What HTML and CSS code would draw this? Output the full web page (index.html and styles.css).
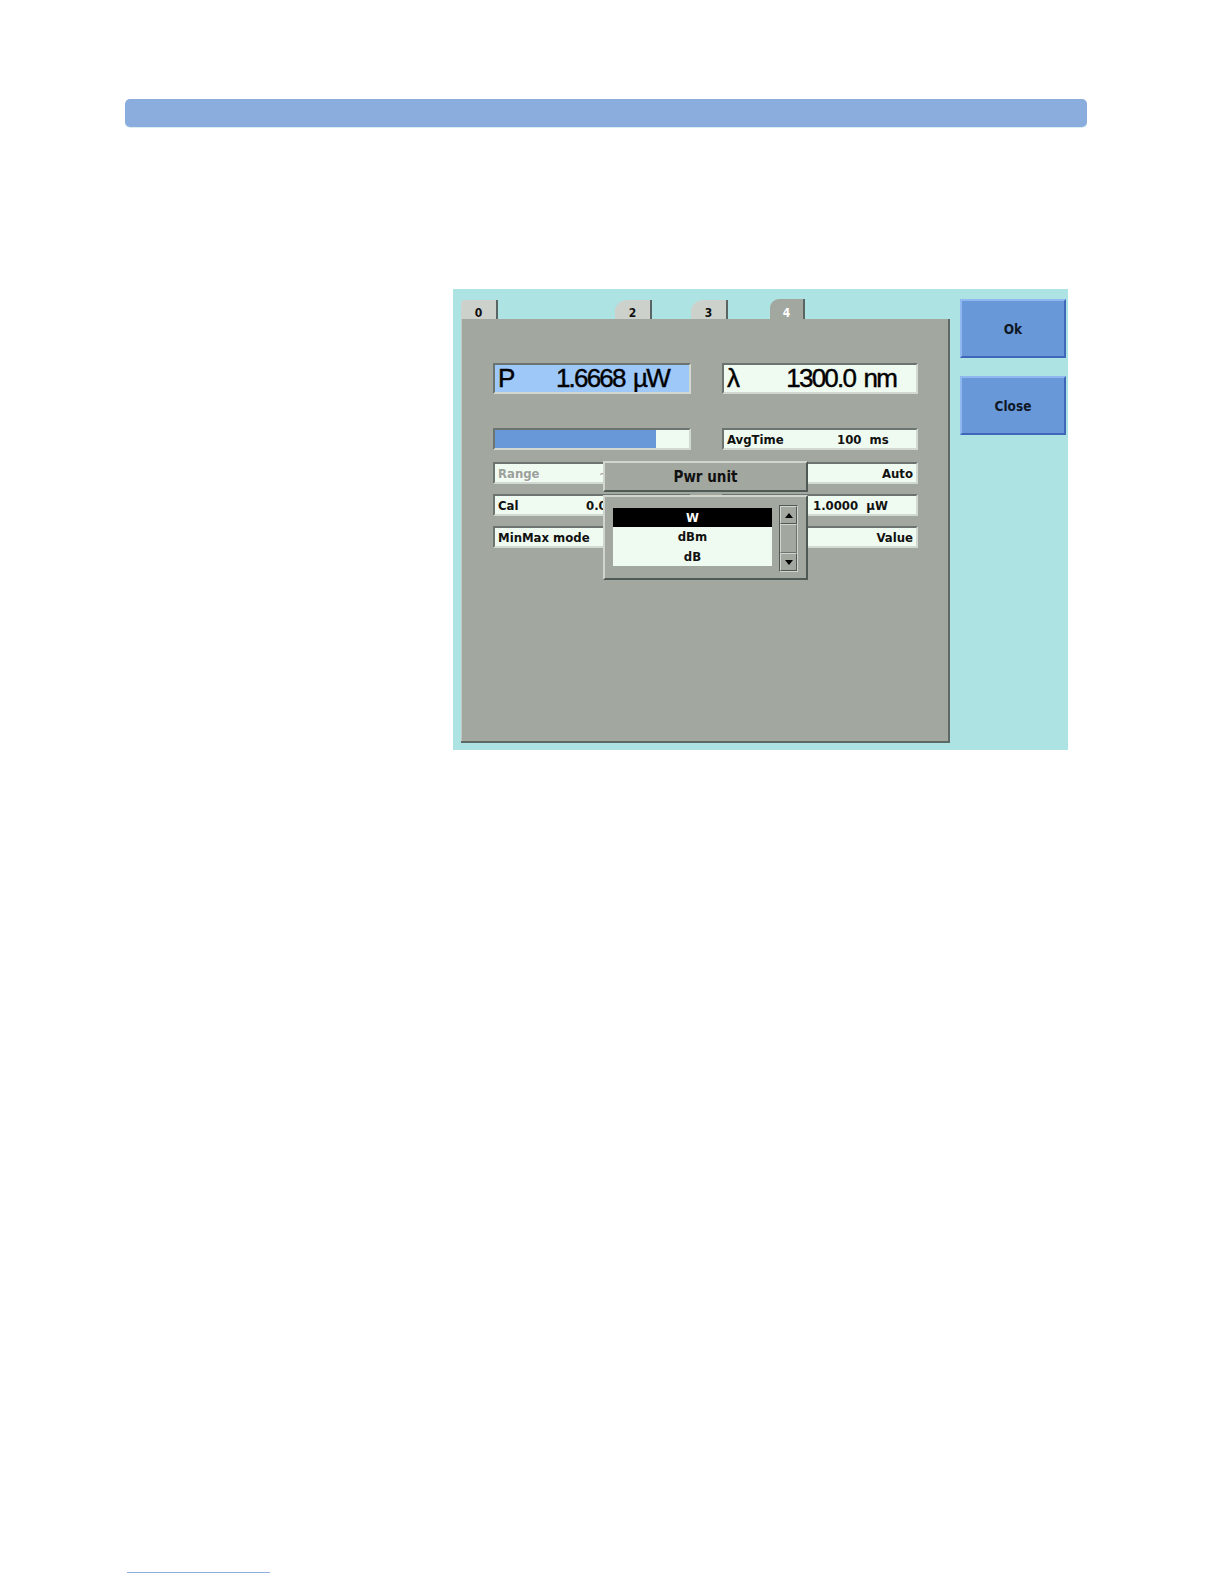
FILE: index.html
```html
<!DOCTYPE html>
<html>
<head>
<meta charset="utf-8">
<link rel="stylesheet" href="styles.css">
</head>
<body>
<div class="page">
  <div class="topbar"></div>
  <div class="shot">
    <div class="main">
      <div class="tabs">
        <div class="tab tab0">0</div>
        <div class="tab tab2">2</div>
        <div class="tab tab3">3</div>
        <div class="tab tab4">4</div>
      </div>
      <div class="panel">
        <div class="row row-big">
          <div class="f big pfield"><span>P</span><span>1.6668 µW</span></div>
          <div class="f big lfield"><span>λ</span><span>1300.0 nm</span></div>
        </div>
        <div class="row row-bar">
          <div class="f fl bar"><div class="fill" style="width:161px"></div></div>
          <div class="f fr"><span class="lbl avg">AvgTime</span><span class="pre">100  ms</span></div>
        </div>
        <div class="row row-s1">
          <div class="f fl dis"><span class="lbl rng">Range</span><span>~</span></div>
          <div class="f fr end"><span>Auto</span></div>
        </div>
        <div class="row row-s">
          <div class="f fl"><span class="lbl cal">Cal</span><span class="pre">0.000 dB</span></div>
          <div class="f fr ref"><span class="pre">1.0000  µW</span></div>
        </div>
        <div class="row row-s">
          <div class="f fl"><span>MinMax mode</span></div>
          <div class="f fr end"><span>Value</span></div>
        </div>

        <div class="popup">
          <div class="ptitle">Pwr unit</div>
          <div class="pbody">
            <div class="list">
              <div class="item sel">W</div>
              <div class="item i2">dBm</div>
              <div class="item i2">dB</div>
            </div>
            <div class="sb">
              <div class="sbbtn"><svg width="8" height="5" viewBox="0 0 8 5"><path d="M0 5 L4 0 L8 5 Z" fill="#000"/></svg></div>
              <div class="track"></div>
              <div class="sbbtn"><svg width="8" height="5" viewBox="0 0 8 5"><path d="M0 0 L8 0 L4 5 Z" fill="#000"/></svg></div>
            </div>
          </div>
        </div>
      </div>
    </div>
    <div class="btns">
      <div class="btn">Ok</div>
      <div class="btn">Close</div>
    </div>
  </div>
  <div class="footline"></div>
</div>
</body>
</html>
```
FILE: styles.css
```css
body {
  margin: 0;
  background: #ffffff;
  font-family: "DejaVu Sans Condensed", "DejaVu Sans", sans-serif;
  color: #111;
}
.page {
  width: 1224px;
  display: flex;
  flex-direction: column;
}
.topbar {
  margin: 99px 0 0 125px;
  width: 962px;
  height: 28px;
  background: #8badde;
  border-radius: 5px;
  box-shadow: 0 1px 0 #d8eef4;
}
.shot {
  margin: 162px 0 0 453px;
  width: 615px;
  height: 461px;
  box-sizing: border-box;
  background: #aee3e3;
  display: flex;
  padding-left: 8px;
}
.main {
  width: 489px;
  display: flex;
  flex-direction: column;
}
.tabs {
  display: flex;
  align-items: flex-end;
  height: 19px;
  margin-top: 11px;
}
.tab {
  width: 37px;
  height: 19px;
  box-sizing: border-box;
  border-right: 2px solid #5a6462;
  background: #cdd1cb;
  font-weight: bold;
  font-size: 12px;
  line-height: 14px;
  text-align: center;
  padding-top: 6px;
  border-top-left-radius: 13px 11px;
}
.tab0 { border-top-left-radius: 4px; }
.tab2 { margin-left: 117px; }
.tab3 { margin-left: 39px; }
.tab4 {
  margin-left: 42px;
  width: 35px;
  height: 20px;
  padding-top: 7px;
  background: #a2a8a0;
  color: #ffffff;
  border-top-left-radius: 9px 9px;
}
.panel {
  position: relative;
  height: 424px;
  box-sizing: border-box;
  background: #a2a8a0;
  border-right: 2px solid #5e6864;
  border-bottom: 2px solid #5e6864;
  box-shadow: inset 1px 0 #c4c9c2;
  padding: 44px 0 0 32px;
}
.row {
  display: flex;
  gap: 31px;
}
.row-big { height: 31px; }
.row-bar { height: 22px; margin-top: 34px; }
.row-s1 { height: 22px; margin-top: 12px; }
.row-s { height: 22px; margin-top: 10px; }
.f {
  box-sizing: border-box;
  background: #effbf0;
  border: 2px solid;
  border-color: #6b7470 #d2d9d1 #d2d9d1 #6b7470;
  display: flex;
  align-items: center;
  font-weight: bold;
  font-size: 13px;
  padding: 0 3px;
  overflow: hidden;
  white-space: nowrap;
}
.fl { width: 198px; }
.fr { width: 196px; }
.big {
  font-family: "Liberation Sans", Arial, sans-serif;
  font-weight: normal;
  font-size: 26px;
  letter-spacing: -1.8px;
  word-spacing: 3px;
  -webkit-text-stroke: 0.4px #000;
  color: #000;
  justify-content: space-between;
  padding: 0 20px 0 3px;
}
.pfield { width: 198px; background: #9ec8f8; }
.lfield { width: 196px; }
.bar { padding: 0; }
.fill {
  height: 100%;
  background: #6898d8;
}
.pre { white-space: pre; }
.lbl.avg { width: 110px; }
.lbl.rng { width: 101px; }
.lbl.cal { width: 88px; }
.dis { color: #9aa09a; text-shadow: 1px 1px 0 #ffffff; }
.end { justify-content: flex-end; }
.ref { padding-left: 89px; }

.popup {
  position: absolute;
  left: 142px;
  top: 142px;
  width: 205px;
  height: 119px;
  display: flex;
  flex-direction: column;
}
.ptitle {
  height: 31px;
  box-sizing: border-box;
  border: 2px solid;
  border-color: #d0d6ce #4f5956 #4f5956 #d0d6ce;
  background: #a2a8a0;
  font-weight: bold;
  font-size: 15px;
  display: flex;
  align-items: center;
  justify-content: center;
}
.pbody {
  margin-top: 3px;
  height: 85px;
  box-sizing: border-box;
  border: 2px solid;
  border-color: #d0d6ce #4f5956 #4f5956 #d0d6ce;
  background: #a2a8a0;
  display: flex;
  align-items: flex-start;
  padding: 8px 0 0 8px;
}
.list {
  margin-top: 3px;
  width: 159px;
  height: 58px;
  background: #effbf0;
  font-weight: bold;
  font-size: 13px;
}
.item {
  height: 19px;
  line-height: 19px;
  text-align: center;
}
.item.i2 { height: 19.5px; line-height: 19.5px; }
.item.sel {
  background: #000000;
  color: #ffffff;
}
.sb {
  margin-left: 7px;
  width: 19px;
  height: 67px;
  box-sizing: border-box;
  border: 1px solid;
  border-color: #4f5956 #d0d6ce #d0d6ce #4f5956;
  display: flex;
  flex-direction: column;
  background: #a2a8a0;
}
.sbbtn {
  height: 18px;
  box-sizing: border-box;
  border: 1px solid;
  border-color: #d0d6ce #4f5956 #4f5956 #d0d6ce;
  display: flex;
  align-items: center;
  justify-content: center;
}
.track {
  flex: 1;
  box-sizing: border-box;
  border: 1px solid;
  border-color: #d0d6ce #6b7470 #6b7470 #d0d6ce;
}
.btns {
  margin-left: 10px;
  padding-top: 10px;
  display: flex;
  flex-direction: column;
  gap: 18px;
}
.btn {
  width: 106px;
  height: 59px;
  box-sizing: border-box;
  background: #6898d8;
  border: 2px solid;
  border-color: #90b8f0 #3f66b8 #3f66b8 #90b8f0;
  font-weight: bold;
  font-size: 13.5px;
  color: #101828;
  display: flex;
  align-items: center;
  justify-content: center;
}
.footline {
  margin: 822px 0 0 127px;
  width: 143px;
  height: 1px;
  background: #8fadde;
}
```
